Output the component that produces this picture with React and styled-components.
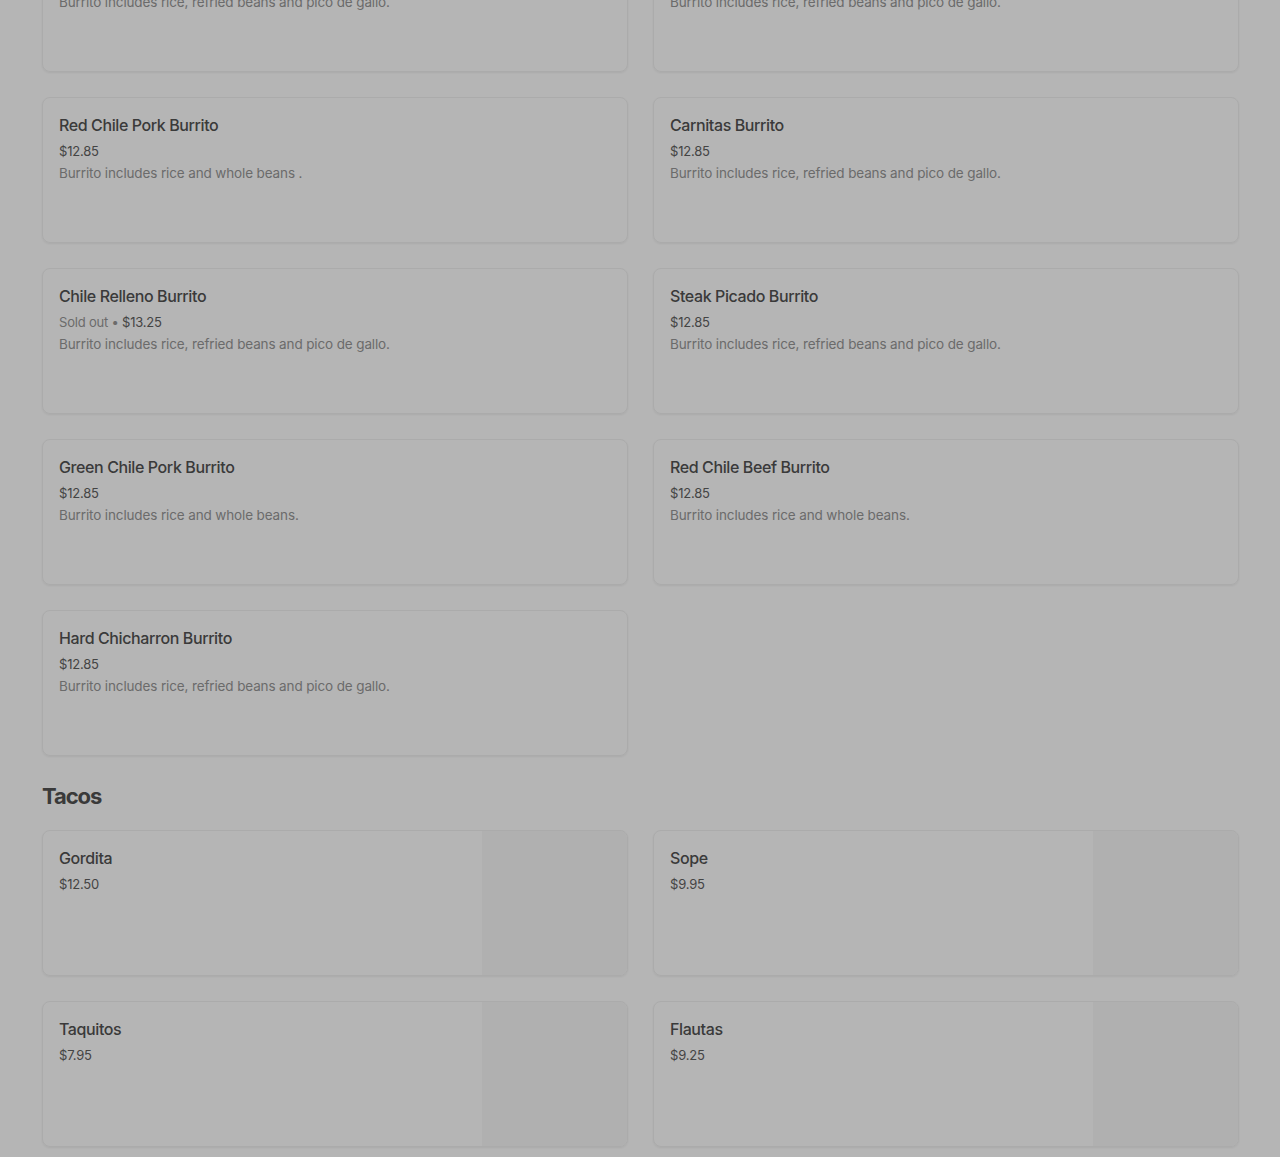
import React from "react";
import styled, { createGlobalStyle } from "styled-components";

const burritos = [
  { name: "Bean and Cheese Burrito", price: "$12.85", desc: "Burrito includes rice, refried beans and pico de gallo." },
  { name: "Chicken Burrito", price: "$12.85", desc: "Burrito includes rice, refried beans and pico de gallo." },
  { name: "Red Chile Pork Burrito", price: "$12.85", desc: "Burrito includes rice and whole beans ." },
  { name: "Carnitas Burrito", price: "$12.85", desc: "Burrito includes rice, refried beans and pico de gallo." },
  { name: "Chile Relleno Burrito", price: "$13.25", soldOut: true, desc: "Burrito includes rice, refried beans and pico de gallo." },
  { name: "Steak Picado Burrito", price: "$12.85", desc: "Burrito includes rice, refried beans and pico de gallo." },
  { name: "Green Chile Pork Burrito", price: "$12.85", desc: "Burrito includes rice and whole beans." },
  { name: "Red Chile Beef Burrito", price: "$12.85", desc: "Burrito includes rice and whole beans." },
  { name: "Hard Chicharron Burrito", price: "$12.85", desc: "Burrito includes rice, refried beans and pico de gallo." },
];

const tacos = [
  { name: "Gordita", price: "$12.50" },
  { name: "Sope", price: "$9.95" },
  { name: "Taquitos", price: "$7.95" },
  { name: "Flautas", price: "$9.25" },
];

const MenuCard = ({ item, withImage }) => (
  <Card>
    <CardBody>
      <ItemName>{item.name}</ItemName>
      <Price>
        {item.soldOut && <SoldOut>Sold out • </SoldOut>}
        {item.price}
      </Price>
      {item.desc && <Desc>{item.desc}</Desc>}
    </CardBody>
    {withImage && <Thumb />}
  </Card>
);

const App = () => {
  return (
    <>
      <GlobalStyle />
      <Page>
        <Grid $shift>
          {burritos.map((item) => (
            <MenuCard key={item.name} item={item} />
          ))}
        </Grid>
        <SectionTitle>Tacos</SectionTitle>
        <Grid>
          {tacos.map((item) => (
            <MenuCard key={item.name} item={item} withImage />
          ))}
        </Grid>
      </Page>
    </>
  );
};

const GlobalStyle = createGlobalStyle`
  html, body {
    margin: 0;
    background: #b5b5b5;
    overflow: hidden;
  }
  body {
    font-family: Inter, "Liberation Sans", sans-serif;
  }
`;

const Page = styled.div`
  padding: 0 41px 0 42px;
  height: 1157px;
  overflow: hidden;
`;

// page is scrolled: the first row of burritos is partly above the fold
const Grid = styled.div`
  display: grid;
  grid-template-columns: 1fr 1fr;
  gap: 25px;
  margin-top: ${(p) => (p.$shift ? "-74px" : "0")};
`;

const Card = styled.div`
  display: flex;
  height: 146px;
  box-sizing: border-box;
  border: 1px solid #ababab;
  border-radius: 8px;
  box-shadow: 0 1px 2px rgba(0, 0, 0, 0.06);
  overflow: hidden;
`;

const CardBody = styled.div`
  flex: 1;
  padding: 15px 16px;
`;

const ItemName = styled.div`
  font-size: 16px;
  font-weight: 500;
  line-height: 24px;
  color: #3a3a3a;
  letter-spacing: -0.4px;
`;

const Price = styled.div`
  margin-top: 4px;
  font-size: 13px;
  line-height: 20px;
  color: #444;
  letter-spacing: -0.2px;
`;

const SoldOut = styled.span`
  color: #6b6b6b;
`;

const Desc = styled.div`
  margin-top: 2px;
  font-size: 13.5px;
  line-height: 20px;
  color: #6b6b6b;
  letter-spacing: -0.13px;
`;

const Thumb = styled.div`
  width: 145px;
  background: #b0b0b0;
`;

const SectionTitle = styled.h2`
  margin: 24px 0 18px;
  font-size: 22px;
  line-height: 32px;
  font-weight: 700;
  letter-spacing: -1.1px;
  color: #3a3a3a;
`;

export default App;
